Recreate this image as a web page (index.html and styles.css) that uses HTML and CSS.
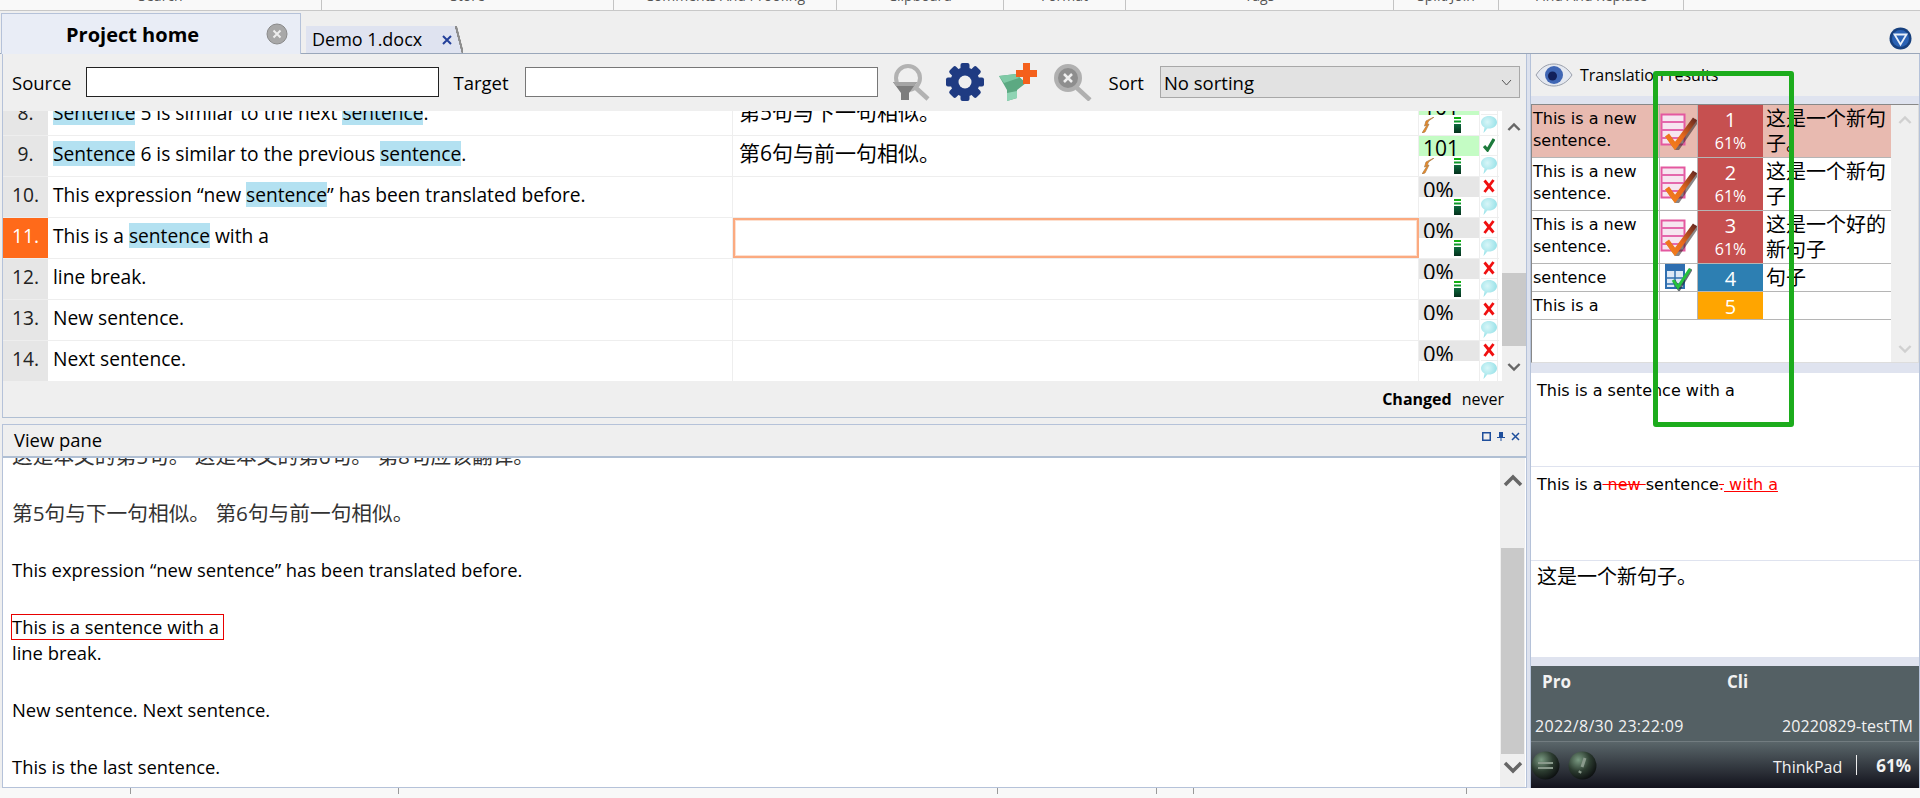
FILE: index.html
```html
<!DOCTYPE html>
<html>
  <head>
    <meta charset="utf-8" />
    <title>Demo 1.docx</title>
    <link rel="stylesheet" href="styles.css">
  </head>
  <body>
    <svg class="defs" width="0" height="0">
      <defs>
        <linearGradient id="gBar" x1="0" y1="0" x2="0" y2="1">
          <stop offset="0" stop-color="#0c6a3c"/><stop offset="1" stop-color="#04301c"/>
        </linearGradient>
        <linearGradient id="gCheck" x1="0" y1="1" x2="1" y2="0">
          <stop offset="0" stop-color="#f4801c"/><stop offset=".45" stop-color="#e86a1c"/><stop offset="1" stop-color="#6a2a20"/>
        </linearGradient>
        <radialGradient id="gBubble" cx="0.4" cy="0.35" r="0.7">
          <stop offset="0" stop-color="#d8f6f8"/><stop offset="1" stop-color="#8fdfe6"/>
        </radialGradient>
        <radialGradient id="gBall" cx="0.35" cy="0.3" r="0.75">
          <stop offset="0" stop-color="#7a9a82"/><stop offset="0.55" stop-color="#2c3c30"/><stop offset="1" stop-color="#0c0f10"/>
        </radialGradient>
        <symbol id="i-bolt" viewBox="0 0 12 16">
          <path d="M12 0 4 4 2.500 9l2.500-1L0 16l3-1 4-8-2 .5L6.500 4z" fill="#f08a24" stroke="#a87a44" stroke-width=".7"/>
        </symbol>
        <symbol id="i-bars" viewBox="0 0 7 16">
          <rect width="7" height="2" fill="#12b012"/>
          <rect y="3.500" width="7" height="2" fill="#0e9a2a"/>
          <rect y="7" width="7" height="9" fill="url(#gBar)"/>
        </symbol>
        <symbol id="i-bubble" viewBox="0 0 16 17">
          <path d="M8 0c4.400 0 8 2.700 8 6.200s-3.600 6.300-8 6.300c-.6 0-1.200 0-1.700-.1L2.500 17l1-5.600C1.400 10.300 0 8.400 0 6.200 0 2.700 3.600 0 8 0z" fill="url(#gBubble)"/>
        </symbol>
        <symbol id="i-cross" viewBox="0 0 12 14">
          <path d="M1.500 1.500 10.500 12.500M10.500 1 1.500 13" stroke="#f01010" stroke-width="2.800" fill="none"/>
        </symbol>
        <symbol id="i-tick" viewBox="0 0 12 14">
          <path d="M1 8l3.500 4L11 1" stroke="#1d7a3c" stroke-width="3.200" fill="none"/>
        </symbol>
        <symbol id="i-tm" viewBox="0 0 37 37">
          <rect x="1.500" y="1.500" width="23" height="30" fill="#f6e6f0" stroke="#e4589f" stroke-width="2"/>
          <path d="M1.500 9h23M1.500 17h23M1.500 25h23" stroke="#e468ac" stroke-width="2"/>
          <path d="M9 25l8 11L37 7" stroke="#2a2020" stroke-width="4.500" fill="none" opacity=".55"/>
          <path d="M7 22l8 11L35 6" stroke="url(#gCheck)" stroke-width="5" fill="none"/>
        </symbol>
        <symbol id="i-term" viewBox="0 0 27 27">
          <rect x="1" y="1" width="18" height="23" fill="#dce8f6" stroke="#2f6fb0" stroke-width="2"/>
          <rect x="1" y="1" width="18" height="6" fill="#2f6fb0"/>
          <path d="M1 14h18M1 20h18M10 7v17" stroke="#2f6fb0" stroke-width="1.500"/>
          <path d="M9 17l5 8L26 5" stroke="#23303a" stroke-width="3.500" fill="none" opacity=".7"/>
          <path d="M8 16l5 7L25 5" stroke="#25c23c" stroke-width="3" fill="none"/>
        </symbol>
        <symbol id="i-up" viewBox="0 0 20 12">
          <path d="M2 11 10 3l8 8" stroke="currentColor" stroke-width="3.500" fill="none"/>
        </symbol>
        <symbol id="i-down" viewBox="0 0 20 12">
          <path d="M2 1l8 8 8-8" stroke="currentColor" stroke-width="3.500" fill="none"/>
        </symbol>
      </defs>
    </svg>

    <div class="ribbon">
      <div class="rib-group w-search">Search</div>
      <div class="rib-group w-store">Store</div>
      <div class="rib-group w-comments">Comments And Proofing</div>
      <div class="rib-group w-clip">Clipboard</div>
      <div class="rib-group w-format">Format</div>
      <div class="rib-group w-tags">Tags</div>
      <div class="rib-group w-split">Split/Join</div>
      <div class="rib-group w-find">Find And Replace</div>
    </div>

    <div class="tabbar">
      <div class="tab-home">
        <span>Project home</span>
        <svg class="tab-close" width="22" height="22" viewBox="0 0 22 22">
          <circle cx="11" cy="11" r="10" fill="#a8a8a8" stroke="#8a8a8a"/>
          <path d="M7.500 7.500l7 7M14.500 7.500l-7 7" stroke="#eee" stroke-width="2"/>
        </svg>
      </div>
      <div class="tab-doc">
        <span>Demo 1.docx</span>
        <svg width="10" height="10" viewBox="0 0 10 10"><path d="M1 1l8 8M9 1l-8 8" stroke="#23409a" stroke-width="2"/></svg>
      </div>
      <svg class="tab-menu" width="23" height="23" viewBox="0 0 23 23">
        <circle cx="11.500" cy="11.500" r="11" fill="#17407e"/>
        <circle cx="11.500" cy="11.500" r="8.500" fill="#2a62b4"/>
        <path d="M5.500 7.500h12l-6 10z" fill="none" stroke="#e8f0fa" stroke-width="1.800"/>
      </svg>
    </div>

    <div class="main">
      <div class="left">
        <div class="toolbar">
          <label class="tool-label">Source</label>
          <input class="tool-input tool-source" type="text">
          <label class="tool-label">Target</label>
          <input class="tool-input tool-target" type="text">
          <div class="tool-icons">
            <svg width="40" height="38" viewBox="0 0 40 38">
              <circle cx="17" cy="15" r="12" fill="none" stroke="#b2b2b2" stroke-width="4"/>
              <path d="M25 25l12 11" stroke="#b2b2b2" stroke-width="4.500"/>
              <path d="M2 19h24l-8 11v7h-8v-7z" fill="#7c7c7c"/>
              <path d="M2 19h24l-3 4H5z" fill="#a4a4a4"/>
            </svg>
            <svg width="40" height="38" viewBox="0 0 40 38">
              <g fill="#1f3b82">
                <rect x="15.500" y="0" width="9" height="38" rx="2"/>
                <rect x="15.500" y="0" width="9" height="38" rx="2" transform="rotate(45 20 19)"/>
                <rect x="15.500" y="0" width="9" height="38" rx="2" transform="rotate(90 20 19)"/>
                <rect x="15.500" y="0" width="9" height="38" rx="2" transform="rotate(135 20 19)"/>
                <circle cx="20" cy="19" r="14.500"/>
              </g>
              <circle cx="20" cy="19" r="6.500" fill="#efefef"/>
            </svg>
            <svg width="40" height="38" viewBox="0 0 40 38">
              <path d="M0 13l17-2 10 9-9 7v8L8 38V27z" fill="#5ca982"/>
              <path d="M0 13l17-2 3 4L5 20z" fill="#7fcaa6"/>
              <path d="M8 30l10-2v7L8 38z" fill="#8fd4b4"/>
              <path d="M24 0h7v7h7v7h-7v7h-7v-7h-7V7h7z" fill="#f4601c"/>
            </svg>
            <svg width="40" height="38" viewBox="0 0 40 38">
              <circle cx="15" cy="15" r="12" fill="#8e8e8e" stroke="#b0b0b0" stroke-width="4"/>
              <path d="M11 11l8 8M19 11l-8 8" stroke="#eee" stroke-width="2.500"/>
              <path d="M24 25l13 12" stroke="#b0b0b0" stroke-width="4.500"/>
            </svg>
          </div>
          <label class="tool-label tool-sort">Sort</label>
          <div class="tool-select">
            <span>No sorting</span>
            <svg width="11" height="7" viewBox="0 0 11 7"><path d="M1 1l4.500 5L10 1" stroke="#555" fill="none"/></svg>
          </div>
        </div>

        <div class="grid-wrap">
          <div class="seg-list">
            <div class="seg">
              <div class="seg-num">8.</div>
              <div class="seg-src"><mark>Sentence</mark> 5 is similar to the next <mark>sentence</mark>.</div>
              <div class="seg-tgt">第5句与下一句相似。</div>
              <div class="seg-match">
                <div class="match-top is-full">101</div>
                <div class="match-low"><svg class="ic-bolt"><use href="#i-bolt"/></svg><svg class="ic-bars"><use href="#i-bars"/></svg></div>
              </div>
              <div class="seg-state">
                <div class="state-top"></div>
                <div class="state-low"><svg class="ic-bubble"><use href="#i-bubble"/></svg></div>
              </div>
            </div>
            <div class="seg">
              <div class="seg-num">9.</div>
              <div class="seg-src"><mark>Sentence</mark> 6 is similar to the previous <mark>sentence</mark>.</div>
              <div class="seg-tgt">第6句与前一句相似。</div>
              <div class="seg-match">
                <div class="match-top is-full">101</div>
                <div class="match-low"><svg class="ic-bolt"><use href="#i-bolt"/></svg><svg class="ic-bars"><use href="#i-bars"/></svg></div>
              </div>
              <div class="seg-state">
                <div class="state-top"><svg class="ic-mark"><use href="#i-tick"/></svg></div>
                <div class="state-low"><svg class="ic-bubble"><use href="#i-bubble"/></svg></div>
              </div>
            </div>
            <div class="seg">
              <div class="seg-num">10.</div>
              <div class="seg-src">This expression “new <mark>sentence</mark>” has been translated before.</div>
              <div class="seg-tgt"></div>
              <div class="seg-match">
                <div class="match-top">0%</div>
                <div class="match-low"><svg class="ic-bars"><use href="#i-bars"/></svg></div>
              </div>
              <div class="seg-state">
                <div class="state-top"><svg class="ic-mark"><use href="#i-cross"/></svg></div>
                <div class="state-low"><svg class="ic-bubble"><use href="#i-bubble"/></svg></div>
              </div>
            </div>
            <div class="seg">
              <div class="seg-num is-active">11.</div>
              <div class="seg-src">This is a <mark>sentence</mark> with a</div>
              <div class="seg-tgt is-editing"></div>
              <div class="seg-match">
                <div class="match-top">0%</div>
                <div class="match-low"><svg class="ic-bars"><use href="#i-bars"/></svg></div>
              </div>
              <div class="seg-state">
                <div class="state-top"><svg class="ic-mark"><use href="#i-cross"/></svg></div>
                <div class="state-low"><svg class="ic-bubble"><use href="#i-bubble"/></svg></div>
              </div>
            </div>
            <div class="seg">
              <div class="seg-num">12.</div>
              <div class="seg-src">line break.</div>
              <div class="seg-tgt"></div>
              <div class="seg-match">
                <div class="match-top">0%</div>
                <div class="match-low"><svg class="ic-bars"><use href="#i-bars"/></svg></div>
              </div>
              <div class="seg-state">
                <div class="state-top"><svg class="ic-mark"><use href="#i-cross"/></svg></div>
                <div class="state-low"><svg class="ic-bubble"><use href="#i-bubble"/></svg></div>
              </div>
            </div>
            <div class="seg">
              <div class="seg-num">13.</div>
              <div class="seg-src">New sentence.</div>
              <div class="seg-tgt"></div>
              <div class="seg-match">
                <div class="match-top">0%</div>
                <div class="match-low"></div>
              </div>
              <div class="seg-state">
                <div class="state-top"><svg class="ic-mark"><use href="#i-cross"/></svg></div>
                <div class="state-low"><svg class="ic-bubble"><use href="#i-bubble"/></svg></div>
              </div>
            </div>
            <div class="seg">
              <div class="seg-num">14.</div>
              <div class="seg-src">Next sentence.</div>
              <div class="seg-tgt"></div>
              <div class="seg-match">
                <div class="match-top">0%</div>
                <div class="match-low"></div>
              </div>
              <div class="seg-state">
                <div class="state-top"><svg class="ic-mark"><use href="#i-cross"/></svg></div>
                <div class="state-low"><svg class="ic-bubble"><use href="#i-bubble"/></svg></div>
              </div>
            </div>
          </div>
          <div class="scroll scroll-grid">
            <svg class="chev"><use href="#i-up"/></svg>
            <div class="thumb thumb-grid"></div>
            <svg class="chev"><use href="#i-down"/></svg>
          </div>
        </div>

        <div class="grid-foot"><b>Changed</b><span>never</span></div>

        <div class="view">
          <div class="view-head">
            <span class="view-title">View pane</span>
            <div class="view-btns">
              <svg width="9" height="9" viewBox="0 0 9 9"><rect x=".75" y=".75" width="7.500" height="7.500" fill="none" stroke="#1f4f9c" stroke-width="1.500"/></svg>
              <svg width="8" height="9" viewBox="0 0 8 9"><path d="M2 0h4v5h2v1H4.500v3h-1V6H0V5h2z" fill="#1f4f9c"/></svg>
              <svg width="9" height="9" viewBox="0 0 9 9"><path d="M1 1l7 7M8 1L1 8" stroke="#1f4f9c" stroke-width="1.500"/></svg>
            </div>
          </div>
          <div class="view-body">
            <div class="view-text">
              <p class="zh">这是本文的第5句。 这是本文的第6句。 第8句应该翻译。</p>
              <p class="zh">第5句与下一句相似。 第6句与前一句相似。</p>
              <p>This expression “new sentence” has been translated before.</p>
              <p><span class="view-current">This is a sentence with a</span><br>line break.</p>
              <p>New sentence. Next sentence.</p>
              <p>This is the last sentence.</p>
            </div>
            <div class="scroll scroll-view">
              <svg class="chev"><use href="#i-up"/></svg>
              <div class="thumb thumb-view"></div>
              <svg class="chev"><use href="#i-down"/></svg>
            </div>
          </div>
        </div>
      </div>

      <div class="splitter"></div>

      <div class="right">
        <div class="res-head">
          <svg width="38" height="24" viewBox="0 0 38 24">
            <path d="M1 12C7 3 13 1 19 1s13 3 18 11c-5 8-12 11-18 11S7 21 1 12z" fill="#e4e8f0" stroke="#9aa0ac"/>
            <circle cx="19" cy="12" r="9" fill="#3f66b4"/>
            <circle cx="17.500" cy="13" r="4.500" fill="#12205a"/>
          </svg>
          <span>Translation results</span>
        </div>
        <div class="band"></div>
        <div class="res-table">
          <div class="res-rows">
            <div class="res-row is-hit">
              <div class="res-src">This is a new sentence.</div>
              <div class="res-icon"><svg class="ic-tm"><use href="#i-tm"/></svg></div>
              <div class="res-num c-tm"><div>1</div><small>61%</small></div>
              <div class="res-tgt">这是一个新句子。</div>
            </div>
            <div class="res-row">
              <div class="res-src">This is a new sentence.</div>
              <div class="res-icon"><svg class="ic-tm"><use href="#i-tm"/></svg></div>
              <div class="res-num c-tm"><div>2</div><small>61%</small></div>
              <div class="res-tgt">这是一个新句子</div>
            </div>
            <div class="res-row">
              <div class="res-src">This is a new sentence.</div>
              <div class="res-icon"><svg class="ic-tm"><use href="#i-tm"/></svg></div>
              <div class="res-num c-tm"><div>3</div><small>61%</small></div>
              <div class="res-tgt">这是一个好的新句子</div>
            </div>
            <div class="res-row is-short">
              <div class="res-src">sentence</div>
              <div class="res-icon"><svg class="ic-term"><use href="#i-term"/></svg></div>
              <div class="res-num c-term"><div>4</div></div>
              <div class="res-tgt">句子</div>
            </div>
            <div class="res-row is-short">
              <div class="res-src">This is a</div>
              <div class="res-icon"></div>
              <div class="res-num c-nt"><div>5</div></div>
              <div class="res-tgt"></div>
            </div>
          </div>
          <div class="scroll scroll-res">
            <svg class="chev"><use href="#i-up"/></svg>
            <svg class="chev"><use href="#i-down"/></svg>
          </div>
        </div>
        <div class="band band-res"></div>
        <div class="compare">This is a sentence with a</div>
        <div class="compare">This is a<del> new </del>sentence<del>.</del><ins> with a</ins></div>
        <div class="compare compare-zh">这是一个新句子。</div>
        <div class="band band-meta"></div>
        <div class="meta">
          <div class="meta-line meta-names"><b>Pro</b><b class="meta-cli">Cli</b></div>
          <div class="meta-line meta-info"><span>2022/8/30 23:22:09</span><span class="meta-tm">20220829-testTM</span></div>
        </div>
        <div class="meta-foot">
          <svg width="29" height="29" viewBox="0 0 29 29"><circle cx="14.500" cy="14.500" r="14" fill="url(#gBall)"/><path d="M7 12h15M7 17h15" stroke="#8a9a8c" stroke-width="2"/></svg>
          <svg width="29" height="29" viewBox="0 0 29 29"><circle cx="14.500" cy="14.500" r="14" fill="url(#gBall)"/><path d="M17 7l-3 9M12.500 20l-1 2" stroke="#8a9a8c" stroke-width="3"/></svg>
          <span class="meta-host">ThinkPad</span>
          <span class="meta-sep"></span>
          <b>61%</b>
        </div>
      </div>
    </div>

    <div class="statusbar">
      <div class="st-cell st-a"></div>
      <div class="st-cell st-b"></div>
      <div class="st-cell st-c"></div>
      <div class="st-cell st-d"></div>
      <div class="st-cell st-e"></div>
      <div class="st-cell st-f"></div>
    </div>

    <div class="callout"></div>
  </body>
</html>
```

FILE: styles.css
```css
html, body {
  margin: 0;
  height: 100%;
}
body {
  display: flex;
  flex-direction: column;
  height: 798px;
  overflow: hidden;
  position: relative;
  background-color: #efefef;
  color: #000;
  font-family: "Open Sans", "Noto Sans CJK SC", sans-serif;
}
.defs {
  position: absolute;
}

/* ribbon, only its last pixels are on screen */
.ribbon {
  display: flex;
  height: 10px;
  overflow: hidden;
  background-color: #f9f9f9;
  border-bottom: 1px solid #c8c8c8;
  font-size: 14px;
  line-height: 14px;
  color: #555;
}
.rib-group {
  box-sizing: border-box;
  margin-top: -11px;
  height: 21px;
  border-right: 1px solid #c4c4c4;
  text-align: center;
}
.w-search { width: 322px; }
.w-store { width: 292px; }
.w-comments { width: 223px; }
.w-clip { width: 167px; }
.w-format { width: 122px; }
.w-tags { width: 268px; }
.w-split { width: 105px; }
.w-find { width: 185px; }

/* tabs */
.tabbar {
  display: flex;
  align-items: flex-end;
  height: 43px;
  box-sizing: border-box;
  padding-left: 1px;
  border-bottom: 1px solid #9aa7ba;
}
.tab-home {
  display: flex;
  align-items: center;
  box-sizing: border-box;
  width: 300px;
  height: 41px;
  margin-bottom: -1px;
  padding: 0 12px 0 64px;
  background-color: #e9edf6;
  border: 1px solid #b5c2d9;
  border-bottom: none;
  font-size: 20px;
  font-weight: 700;
}
.tab-close {
  margin-left: auto;
}
.tab-doc {
  display: flex;
  align-items: center;
  gap: 20px;
  box-sizing: border-box;
  width: 157px;
  height: 27px;
  margin-left: 5px;
  padding-left: 6px;
  background: linear-gradient(75.5deg, #dfe3f0 94.8%, #8d8d8d 95%, #8d8d8d 96.2%, #efefef 96.5%);
  font-size: 18px;
  line-height: 27px;
}
.tab-menu {
  margin-left: auto;
  margin-right: 8px;
  margin-bottom: 3px;
}

/* main split */
.main {
  display: flex;
  height: 734px;
}
.left {
  display: flex;
  flex-direction: column;
  box-sizing: border-box;
  width: 1526px;
  padding-left: 2px;
}
.splitter {
  width: 3px;
  background-color: #dde2ee;
  border-left: 1px solid #b5c2d9;
}
.right {
  display: flex;
  flex-direction: column;
  flex-grow: 1;
  border-left: 1px solid #b5c2d9;
  border-right: 1px solid #b5c2d9;
}

/* filter row */
.toolbar {
  display: flex;
  align-items: center;
  box-sizing: border-box;
  height: 57px;
  padding-bottom: 1px;
  border-left: 1px solid #b5c2d9;
  font-size: 18.5px;
}
.tool-label {
  margin-left: 9px;
}
.tool-input {
  box-sizing: border-box;
  height: 30px;
  background-color: #fff;
  border: 1px solid #222;
}
.tool-source {
  width: 353px;
  margin-left: 15px;
  margin-right: 5px;
}
.tool-target {
  width: 353px;
  margin-left: 16px;
  border-color: #777;
}
.tool-icons {
  display: flex;
  gap: 14px;
  margin-left: 13px;
}
.tool-sort {
  margin-left: 16px;
}
.tool-select {
  display: flex;
  align-items: center;
  justify-content: space-between;
  box-sizing: border-box;
  width: 360px;
  height: 32px;
  margin-left: 16px;
  padding: 0 7px 0 3px;
  background-color: #e2e2e2;
  border: 1px solid #a8a8a8;
}

/* segment grid */
.grid-wrap {
  display: flex;
  height: 270px;
  overflow: hidden;
  background-color: #fff;
  border-left: 1px solid #b5c2d9;
}
.seg-list {
  width: 1497px;
  margin-top: -16px;
}
.seg {
  display: flex;
  height: 40px;
  border-bottom: 1px solid #eee;
  font-size: 19.2px;
  line-height: 25px;
}
.seg-num {
  width: 45px;
  padding-top: 5px;
  background-color: #e6e6e6;
  text-align: center;
  color: #222;
}
.seg-num.is-active {
  background-color: #ff6a1a;
  color: #fff;
}
.seg-src, .seg-tgt {
  box-sizing: border-box;
  padding: 5px 0 0 5px;
  border-right: 1px solid #eee;
  white-space: nowrap;
}
.seg-src {
  width: 685px;
}
.seg-tgt {
  width: 686px;
  padding-left: 6px;
  font-size: 21px;
}
.seg-tgt.is-editing {
  border: 2px solid #fbaa80;
  box-shadow: inset 0 0 0 1px #fde0d0;
}
mark {
  display: inline-block;
  background-color: #b3e1f1;
  color: inherit;
}
.seg-match {
  width: 60px;
  border-right: 1px solid #eee;
}
.match-top {
  height: 20px;
  overflow: hidden;
  padding-left: 4px;
  background-color: #e6e6e6;
  font-size: 22px;
  line-height: 24px;
  margin-bottom: 1px;
}
.match-top.is-full {
  background-color: #c4fcc4;
  font-size: 21px;
  line-height: 25px;
}
.match-low {
  position: relative;
  display: flex;
  height: 18px;
  padding-top: 1px;
}
.ic-bolt {
  width: 12px;
  height: 16px;
  margin-left: 3px;
}
.ic-bars {
  width: 7px;
  height: 16px;
  margin-left: 35px;
}
.ic-bolt + .ic-bars {
  margin-left: 20px;
}
.seg-state {
  width: 16px;
  margin-left: 1px;
  border-right: 1px solid #eee;
}
.state-top {
  display: flex;
  justify-content: center;
  height: 20px;
  padding-top: 2px;
  box-sizing: border-box;
  border-bottom: 1px solid #eee;
}
.state-low {
  height: 19px;
}
.ic-mark {
  width: 12px;
  height: 14px;
}
.ic-bubble {
  display: block;
  width: 16px;
  height: 17px;
  margin-top: 1px;
}

/* scrollbars */
.scroll {
  display: flex;
  flex-direction: column;
  align-items: center;
  background-color: #efefef;
}
.chev {
  flex-shrink: 0;
  color: #666;
}
.scroll-grid {
  width: 24px;
  margin-left: 3px;
  padding-top: 11px;
  box-sizing: border-box;
}
.scroll-grid .chev {
  width: 14px;
  height: 9px;
}
.thumb {
  align-self: stretch;
  background-color: #c9c9c9;
}
.thumb-grid {
  height: 73px;
  margin-top: 142px;
  margin-bottom: 17px;
}
.grid-foot {
  display: flex;
  justify-content: flex-end;
  align-items: center;
  gap: 10px;
  box-sizing: border-box;
  height: 37px;
  padding-right: 22px;
  border-left: 1px solid #b5c2d9;
  border-bottom: 1px solid #b0bfd3;
  font-size: 16px;
}

/* view pane */
.view {
  display: flex;
  flex-direction: column;
  height: 364px;
  margin-top: 6px;
  box-sizing: border-box;
  border: 1px solid #b5c2d9;
  border-right: none;
}
.view-head {
  display: flex;
  align-items: center;
  justify-content: space-between;
  box-sizing: border-box;
  height: 33px;
  flex-shrink: 0;
  padding: 0 6px 2px 11px;
  border-bottom: 2px solid #b0bfd3;
  font-size: 18.4px;
}
.view-btns {
  display: flex;
  align-items: center;
  gap: 6px;
  padding-bottom: 6px;
}
.view-body {
  display: flex;
  flex-grow: 1;
  overflow: hidden;
  background-color: #fff;
}
.view-text {
  width: 1497px;
  padding-left: 9px;
  box-sizing: border-box;
  font-size: 18.4px;
  line-height: 26px;
}
.view-text p {
  margin: 0 0 31px;
}
.view-text p:first-child {
  margin-top: -15px;
}
.view-text .zh {
  color: #333;
  font-size: 20.7px;
}
.view-current {
  display: inline-block;
  box-sizing: border-box;
  height: 26px;
  margin-left: -1px;
  padding-right: 4px;
  border: 1px solid #e80000;
  line-height: 24px;
}
.scroll-view {
  width: 25px;
  padding-top: 15px;
  box-sizing: border-box;
}
.scroll-view .chev {
  width: 20px;
  height: 14px;
}
.thumb-view {
  height: 206px;
  margin: 61px 1px 7px;
}

/* results */
.res-head {
  display: flex;
  align-items: center;
  gap: 7px;
  box-sizing: border-box;
  height: 42px;
  padding-left: 4px;
  font-size: 16px;
}
.band {
  height: 8px;
  background-color: #dfe3ef;
}
.band-res {
  height: 10px;
}
.band-meta {
  height: 9px;
}
.res-table {
  display: flex;
  height: 259px;
  box-sizing: border-box;
  background-color: #fff;
  border: 1px solid #888;
  border-right: 1px solid #ddd;
  border-bottom: 1px solid #ddd;
  font-family: "DejaVu Sans", "Noto Sans CJK SC", sans-serif;
}
.res-rows {
  width: 359px;
}
.res-row {
  display: flex;
  height: 52px;
  border-bottom: 1px solid #b5b5b5;
  font-size: 16px;
  line-height: 22px;
}
.res-row.is-short {
  height: 27px;
}
.res-row.is-hit {
  background-color: #e8bab0;
}
.res-src {
  box-sizing: border-box;
  width: 127px;
  padding: 3px 0 0 1px;
  overflow: hidden;
}
.res-icon {
  display: flex;
  justify-content: center;
  align-items: center;
  box-sizing: border-box;
  width: 39px;
  border-left: 1px solid #b5b5b5;
  border-right: 1px solid #b5b5b5;
}
.ic-tm {
  width: 37px;
  height: 37px;
}
.ic-term {
  width: 27px;
  height: 27px;
}
.res-num {
  width: 65px;
  padding-top: 3px;
  box-sizing: border-box;
  color: #fff;
  text-align: center;
  font-family: "Open Sans", sans-serif;
  font-size: 20px;
  line-height: 24px;
}
.res-num small {
  display: block;
  font-size: 16px;
  line-height: 22px;
}
.c-tm {
  background-color: #c65050;
  border-bottom: 1px solid #c65050;
}
.c-term {
  background-color: #2d7fb2;
}
.c-nt {
  background-color: #ffa500;
}
.res-tgt {
  box-sizing: border-box;
  width: 128px;
  height: 52px;
  padding-left: 3px;
  overflow: hidden;
  font-family: "Noto Sans CJK SC", sans-serif;
  font-size: 20px;
  line-height: 25px;
}
.is-short .res-tgt {
  height: 27px;
}
.scroll-res {
  flex-grow: 1;
  justify-content: space-between;
  padding: 10px 0 8px;
  color: #ccc;
}
.scroll-res .chev {
  width: 14px;
  height: 9px;
  color: #d0d0d0;
}
.compare {
  box-sizing: border-box;
  height: 94px;
  padding: 6px 0 0 6px;
  background-color: #fff;
  border-bottom: 1px solid #dfe3ef;
  font-family: "DejaVu Sans", "Noto Sans CJK SC", sans-serif;
  font-size: 16px;
  line-height: 24px;
  white-space: pre;
}
.compare-zh {
  height: 96px;
  border-bottom: none;
  font-family: "Noto Sans CJK SC", sans-serif;
  font-size: 20px;
  line-height: 26px;
  padding-top: 2px;
}
del {
  color: #f00;
}
ins {
  color: #f00;
}

/* meta panel */
.meta {
  box-sizing: border-box;
  height: 76px;
  padding: 4px 6px 0 4px;
  background-color: #546064;
  border-bottom: 1px solid #727c80;
  color: #f2f2f2;
  font-size: 17px;
}
.meta-line {
  display: flex;
}
.meta-names {
  height: 45px;
  padding-left: 7px;
}
.meta-cli {
  margin-left: 156px;
}
.meta-info {
  justify-content: space-between;
  font-size: 16px;
  letter-spacing: .3px;
}
.meta-tm {
  letter-spacing: .1px;
}
.meta-foot {
  display: flex;
  align-items: center;
  gap: 8px;
  height: 46px;
  padding: 0 8px 0 0;
  background: linear-gradient(#5a666a, #12121c);
  color: #f2f2f2;
  font-size: 16px;
}
.meta-foot b {
  font-size: 17px;
}
.meta-host {
  margin-left: auto;
  padding-top: 3px;
}
.meta-sep {
  width: 1px;
  height: 20px;
  margin: 0 11px 0 6px;
  background-color: #eee;
}

/* bottom strip */
.statusbar {
  display: flex;
  height: 10px;
  background-color: #f8f8f8;
}
.st-cell {
  box-sizing: border-box;
  height: 6px;
  border-right: 1px solid #999;
}
.st-a { width: 131px; }
.st-b { width: 268px; }
.st-c { width: 599px; }
.st-d { width: 159px; }
.st-e { width: 37px; }
.st-f { width: 273px; }

/* green annotation over the screenshot */
.callout {
  position: absolute;
  left: 1653px;
  top: 71px;
  width: 141px;
  height: 356px;
  box-sizing: border-box;
  border: 5px solid #1cac1c;
  border-radius: 3px;
}
```
